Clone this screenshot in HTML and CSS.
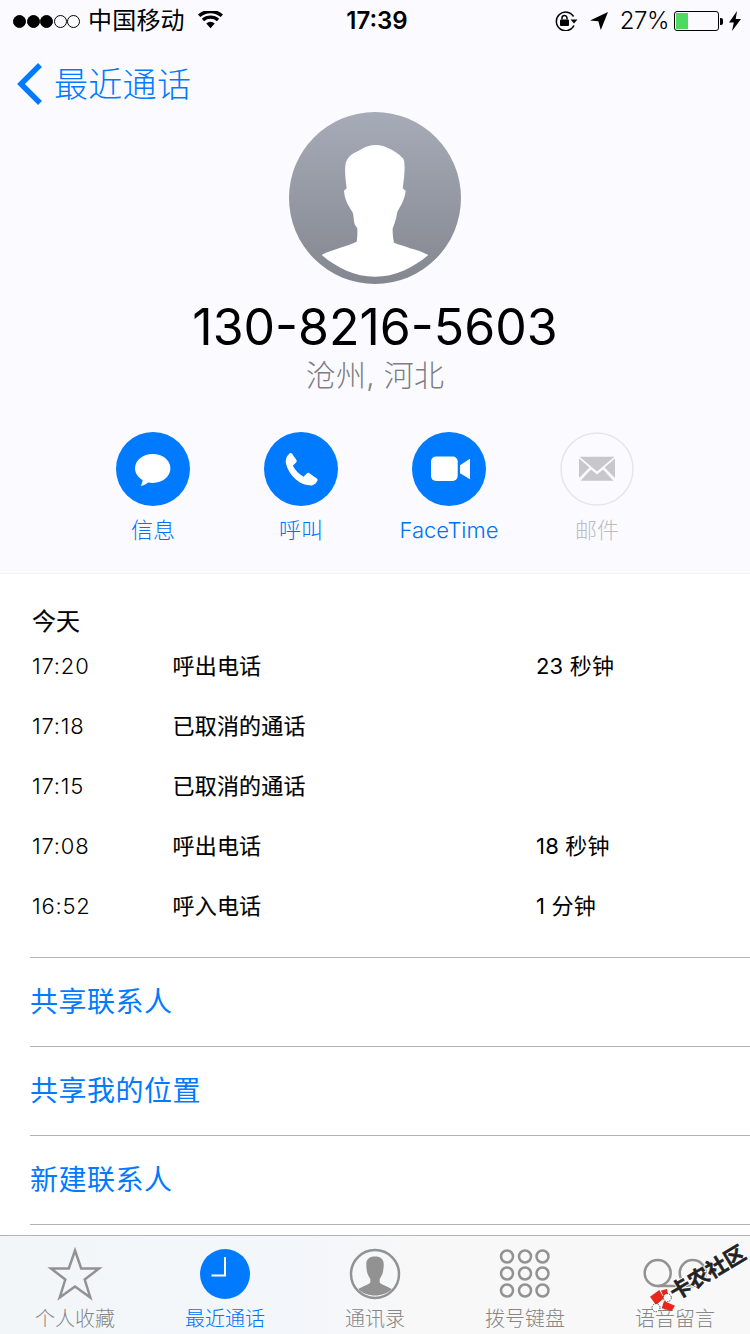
FILE: index.html
```html
<!DOCTYPE html>
<html lang="zh">
<head>
<meta charset="utf-8">
<title>最近通话</title>
<link rel="stylesheet" href="styles.css">
</head>
<body>
<div class="screen">
  <header class="head">
    <div class="status">
      <div class="status-left">
        <div class="dots"><i class="dot on"></i><i class="dot on"></i><i class="dot on"></i><i class="dot"></i><i class="dot"></i></div>
        <span class="carrier">中国移动</span>
        <svg class="wifi" viewBox="0 0 26 18"><path d="M13 17.5 8.6 12.6a6.6 6.6 0 0 1 8.8 0Z"/><path d="M6.3 10.2 4 7.7a13.5 13.5 0 0 1 18 0l-2.3 2.5a10 10 0 0 0-13.4 0Z"/><path d="M2.4 5.9 0 3.3a19.5 19.5 0 0 1 26 0l-2.4 2.6a16 16 0 0 0-21.2 0Z"/></svg>
      </div>
      <div class="clock-time">17:39</div>
      <div class="status-right">
        <svg class="lock" viewBox="0 0 24 20"><path class="ring" d="M20 14.500A9.300 9.300 0 1 1 19.600 5.500"/><path d="M16.500 8.500h7l-3.500 4Z"/><rect x="6" y="8.500" width="9" height="6.500" rx="1"/><path class="ring" d="M8 8.500V7a2.500 2.500 0 0 1 5 0v1.500"/></svg>
        <svg class="loc" viewBox="0 0 18 18"><path d="M18 0 0 8.500l8.300.8L10.800 18Z"/></svg>
        <span class="pct">27%</span>
        <div class="batt"><div class="batt-body"><div class="batt-fill"></div></div><i class="batt-cap"></i></div>
        <svg class="bolt" viewBox="0 0 12 20"><path d="M8 0 0 11.500h4.800L3 20l9-12H6.700Z"/></svg>
      </div>
    </div>
    <nav class="nav">
      <svg class="chev" viewBox="0 0 26 42"><path d="M24 2 5 21l19 19"/></svg>
      <span class="nav-label">最近通话</span>
    </nav>
    <div class="avatar">
      <svg viewBox="0 0 172 172"><defs><linearGradient id="ag" x1="0" y1="0" x2="0" y2="1"><stop offset="0" stop-color="#a6abb8"/><stop offset="1" stop-color="#84878f"/></linearGradient></defs><circle cx="86" cy="86" r="86" fill="url(#ag)"/><path fill="#fff" d="M86 33C78 33 73 37 67.700 39.700 62 42 58.300 46.300 57 50 55.500 56 56 64 57.700 76.300L55 78.700C55.500 83 56 86 57 88 58 92 60 94 61 96.300 62.500 99 64 100 64.300 103 65 108 65 111 66 113L68.300 116.300C68.500 121 68.300 126 67.700 129.700 62 132 57 134 52.700 135.300 45 138 38 140 32.700 143 48 156 66 164.700 86 164.700 106 164.700 124 156 139.300 143 134 140 127 138 121 136.300 116 134 110 133 105 130.700 104 126 103.500 121 103.700 116.300 105 113 107 108 107.700 103 108 100 109 99 110.300 96.300 111.500 94 113 92 114.300 88 115.500 86 116 83 116.700 78.700L113.700 76.300C115.500 64 116 56 115.300 50 114.500 46 113.700 46.300 113.700 46.300 110 42 106 39.700 106 39.700 102 37 99 36 96 34.700 93 33.500 90 33 86 33Z"/></svg>
    </div>
    <h1 class="number">130-8216-5603</h1>
    <p class="place">沧州, 河北</p>
    <div class="actions">
      <div class="action">
        <svg class="disc" viewBox="0 0 74 74"><circle cx="37" cy="37" r="37" fill="#007aff"/><path fill="#fff" d="M36.700 22C26.900 22 19 28.400 19 36.300c0 4.900 3 9.200 7.600 11.800-.1 2.100-.9 4.200-1.900 5.600 2.900-.2 5.500-1.400 7.300-3.300 1.500.3 3.100.5 4.700.5 9.800 0 17.700-6.400 17.700-14.600S46.500 22 36.700 22Z"/></svg>
        <span class="act-label">信息</span>
      </div>
      <div class="action">
        <svg class="disc" viewBox="0 0 74 74"><circle cx="37" cy="37" r="37" fill="#007aff"/><path fill="#fff" d="M25.500 21.500c1-.7 2-.5 2.600.3l4.300 6.200c.6.900.4 1.800-.4 2.600l-3.200 3.200c2.500 4.700 6 8.400 10.800 11l3.200-3.300c.8-.7 1.700-.9 2.500-.3l7.600 5.300c.8.700.9 1.700.3 2.600-1.300 2.500-2.900 4-5.300 4.300-5.500.2-11.600-1.900-16.300-6.200-5.300-4.700-8.600-10.600-9.800-16.300-.5-4 1.100-7.100 3.700-9.400Z"/></svg>
        <span class="act-label">呼叫</span>
      </div>
      <div class="action">
        <svg class="disc" viewBox="0 0 74 74"><circle cx="37" cy="37" r="37" fill="#007aff"/><rect x="19" y="24.500" width="26.700" height="24.500" rx="5" fill="#fff"/><path fill="#fff" d="M48 33.300 58 26.700V47.300L48 41.300Z"/></svg>
        <span class="act-label">FaceTime</span>
      </div>
      <div class="action off">
        <svg class="disc" viewBox="0 0 74 74"><circle cx="37" cy="37" r="36" fill="none" stroke="#e6e6ea" stroke-width="1.500"/><path fill="#c7c7cc" d="M19.500 24.700H54.500L37 39.500Z"/><path fill="#c7c7cc" d="M19 26.500 29.500 35.500 19 46ZM55 26.500 44.500 35.500 55 46ZM20.500 48.700 31 37.500 37 42.500 43 37.500 53.500 48.700Z"/></svg>
        <span class="act-label">邮件</span>
      </div>
    </div>
  </header>

  <main class="body">
    <section class="calls">
      <h2 class="day">今天</h2>
      <div class="call"><span class="c-time">17:20</span><span class="c-type">呼出电话</span><span class="c-dur">23 秒钟</span></div>
      <div class="call"><span class="c-time">17:18</span><span class="c-type">已取消的通话</span><span class="c-dur"></span></div>
      <div class="call"><span class="c-time">17:15</span><span class="c-type">已取消的通话</span><span class="c-dur"></span></div>
      <div class="call"><span class="c-time">17:08</span><span class="c-type">呼出电话</span><span class="c-dur">18 秒钟</span></div>
      <div class="call"><span class="c-time">16:52</span><span class="c-type">呼入电话</span><span class="c-dur">1 分钟</span></div>
    </section>
    <ul class="links">
      <li class="link">共享联系人</li>
      <li class="link">共享我的位置</li>
      <li class="link">新建联系人</li>
    </ul>
  </main>

  <footer class="tabs">
    <div class="tab">
      <svg class="tab-icon" viewBox="0 0 54 52"><path class="ln" d="M27 2.500 33.200 20.500H51L36.700 31.500 42.300 49.500 27 38.500 11.700 49.500 17.300 31.500 3 20.500H20.800Z"/></svg>
      <span class="tab-label">个人收藏</span>
    </div>
    <div class="tab active">
      <svg class="tab-icon" viewBox="0 0 54 52"><circle cx="27" cy="26" r="25" fill="#007aff"/><path d="M27 9V27.500H13.500" fill="none" stroke="#fff" stroke-width="2"/></svg>
      <span class="tab-label">最近通话</span>
    </div>
    <div class="tab">
      <svg class="tab-icon" viewBox="0 0 54 52"><circle class="ln" cx="27" cy="26" r="24"/><path fill="#929292" d="M27 8.500c-5.500 0-8.700 2.500-8.700 7.500 0 3 .3 6.500 1 9 .8 2.700 2 4.200 3 6v3.500c-.5 1.500-7 3.500-12 6.500 4 4.300 10 6.500 16.700 6.500s12.700-2.200 16.700-6.500c-5-3-11.500-5-12-6.500V31c1-1.800 2.200-3.300 3-6 .7-2.500 1-6 1-9 0-5-3.200-7.500-8.700-7.500Z"/></svg>
      <span class="tab-label">通讯录</span>
    </div>
    <div class="tab">
      <svg class="tab-icon" viewBox="0 0 54 52"><g class="ln"><circle cx="9" cy="8.500" r="6"/><circle cx="27" cy="8.500" r="6"/><circle cx="44.500" cy="8.500" r="6"/><circle cx="9" cy="25.500" r="6"/><circle cx="27" cy="25.500" r="6"/><circle cx="44.500" cy="25.500" r="6"/><circle cx="9" cy="42.500" r="6"/><circle cx="27" cy="42.500" r="6"/><circle cx="44.500" cy="42.500" r="6"/></g></svg>
      <span class="tab-label">拨号键盘</span>
    </div>
    <div class="tab">
      <svg class="tab-icon" viewBox="0 0 54 52"><g class="ln"><circle cx="9.700" cy="25" r="13"/><circle cx="44.700" cy="25" r="13"/><path d="M9.700 38H44.700"/></g></svg>
      <span class="tab-label">语音留言</span>
    </div>
    <div class="mark">
      <svg class="mark-logo" viewBox="0 0 26 26"><path fill="#e8261c" d="M0 8.700 9.300 2 14 10.300 6 17ZM11 2.500 17 1 18 6 14 10ZM14 13 25 17.700 21.700 23 11.700 20.300Z"/><circle cx="17.300" cy="9.700" r="4" fill="#fff" stroke="#222" stroke-width=".8" stroke-dasharray="1.500 1"/><circle cx="6" cy="19.700" r="4" fill="#fff" stroke="#222" stroke-width=".8" stroke-dasharray="1.500 1"/></svg>
      <span class="mark-text">卡农社区</span>
    </div>
  </footer>
</div>
</body>
</html>
```
FILE: styles.css
```css
* { box-sizing: border-box; }
html, body { margin: 0; padding: 0; }
body {
  width: 750px;
  height: 1334px;
  overflow: hidden;
  background: #fff;
  font-family: Inter, "Noto Sans CJK SC", sans-serif;
  color: #000;
}
.screen { width: 750px; height: 1334px; display: flex; flex-direction: column; position: relative; overflow: hidden; }

.head {
  height: 574px;
  background: #fbfbff;
  border-bottom: 1px solid #f2f2f5;
  display: flex;
  flex-direction: column;
  align-items: center;
}
.status {
  width: 100%;
  height: 40px;
  padding: 2px 9px 0 13px;
  display: grid;
  grid-template-columns: 1fr auto 1fr;
  align-items: center;
}
.status-left { display: flex; align-items: center; }
.dots { display: flex; gap: .5px; margin-right: 8px; }
.dot { width: 13px; height: 13px; border-radius: 50%; border: 1px solid #000; display: block; }
.dot.on { background: #000; }
.carrier { font-size: 24px; line-height: 38px; letter-spacing: .2px; }
.wifi { width: 25px; height: 18px; margin-left: 13px; margin-top: -3px; fill: #000; }
.clock-time { font-size: 24px; font-weight: 600; line-height: 38px; }
.status-right { display: flex; align-items: center; justify-content: flex-end; }
.lock { width: 24px; height: 20px; fill: #000; margin-right: 12px; }
.ring { fill: none; stroke: #000; stroke-width: 1.500; }
.loc { width: 18px; height: 18px; fill: #000; margin-right: 12px; }
.pct { font-size: 24px; line-height: 38px; margin-right: 5px; font-weight: 300; letter-spacing: -.5px; }
.batt { display: flex; align-items: center; margin-right: 6px; }
.batt-body { width: 45px; height: 20px; border: 1px solid #000; border-radius: 3px; padding: 1px; }
.batt-fill { width: 12px; height: 16px; background: #4cd964; }
.batt-cap { width: 3px; height: 7px; background: #000; display: block; margin-left: 1px; border-radius: 0 2px 2px 0; }
.bolt { width: 12px; height: 20px; fill: #000; }

.nav { width: 100%; height: 72px; display: flex; align-items: center; padding-left: 15px; padding-top: 24px; padding-bottom: 9px; }
.chev { width: 28px; height: 42px; fill: none; stroke: #007aff; stroke-width: 5.500; margin-right: 11px; }
.nav-label { font-size: 34px; color: #007aff; line-height: 40px; font-weight: 300; margin-top: 2px; letter-spacing: .3px; }

.avatar { width: 172px; height: 172px; }
.avatar svg { display: block; width: 172px; height: 172px; }
.number { margin: 13px 0 0; font-size: 50px; line-height: 60px; font-weight: 400; }
.place { margin: 0; font-size: 30px; line-height: 36px; color: #7d7d82; font-weight: 300; letter-spacing: .3px; }
.actions { display: flex; margin-top: 39px; width: 592px; justify-content: space-between; }
.action { width: 148px; display: flex; flex-direction: column; align-items: center; }
.disc { width: 74px; height: 74px; display: block; }
.act-label { font-size: 22px; line-height: 30px; margin-top: 9px; color: #0072f5; white-space: nowrap; font-weight: 300; }
.off .act-label { color: #bdbdc2; }

.body { flex: 1; display: flex; flex-direction: column; background: #fff; min-height: 0; }
.calls { padding: 33px 0 0 32px; height: 383px; }
.day { margin: 0; font-size: 24px; line-height: 30px; font-weight: 400; -webkit-text-stroke: .15px #000; }
.call { display: flex; height: 60px; align-items: center; font-size: 22px; }
.call:first-of-type { margin-top: -3px; }
.c-time { width: 140.5px; margin-top: 4px; letter-spacing: .8px; font-weight: 300; }
.c-type { width: 363.5px; -webkit-text-stroke: 0.15px #000; letter-spacing: .2px; }
.c-dur { letter-spacing: .2px; }

.links { list-style: none; margin: 0 0 0 30px; padding: 0; }
.link { height: 89px; border-top: 1px solid #b2b2b2; font-size: 28px; line-height: 88px; color: #007aff; letter-spacing: .5px; }
.link:last-child { border-bottom: 1px solid #b2b2b2; height: 90px; }

.tabs {
  height: 99px;
  flex: none;
  background: linear-gradient(90deg, #f3f6f9 0, #f3f6fa 300px, #f8f8f8 420px);
  border-top: 1px solid #b4b4b4;
  display: flex;
  position: relative;
}
.tab { width: 150px; display: flex; flex-direction: column; align-items: center; padding-top: 12px; }
.tab-icon { width: 54px; height: 52px; display: block; overflow: visible; }
.ln { fill: none; stroke: #929292; stroke-width: 2.500; }
.tab-label { font-size: 20px; line-height: 26px; margin-top: 6px; color: #868686; white-space: nowrap; font-weight: 300; }
.active .tab-label { color: #0072f5; }

.mark { position: absolute; left: 645px; top: 10px; width: 105px; height: 90px; }
.mark-logo { position: absolute; left: 5px; top: 42px; width: 26px; height: 26px; }
.mark-text {
  position: absolute;
  left: 21px;
  top: 12px;
  font-size: 21px;
  line-height: 30px;
  font-weight: 700;
  color: #222;
  white-space: nowrap;
  transform: rotate(-31deg);
  -webkit-text-stroke: .5px #222;
  text-shadow: 1px 1px 0 #fff, -1px -1px 0 #fff, 1px -1px 0 #fff, -1px 1px 0 #fff;
}
```
